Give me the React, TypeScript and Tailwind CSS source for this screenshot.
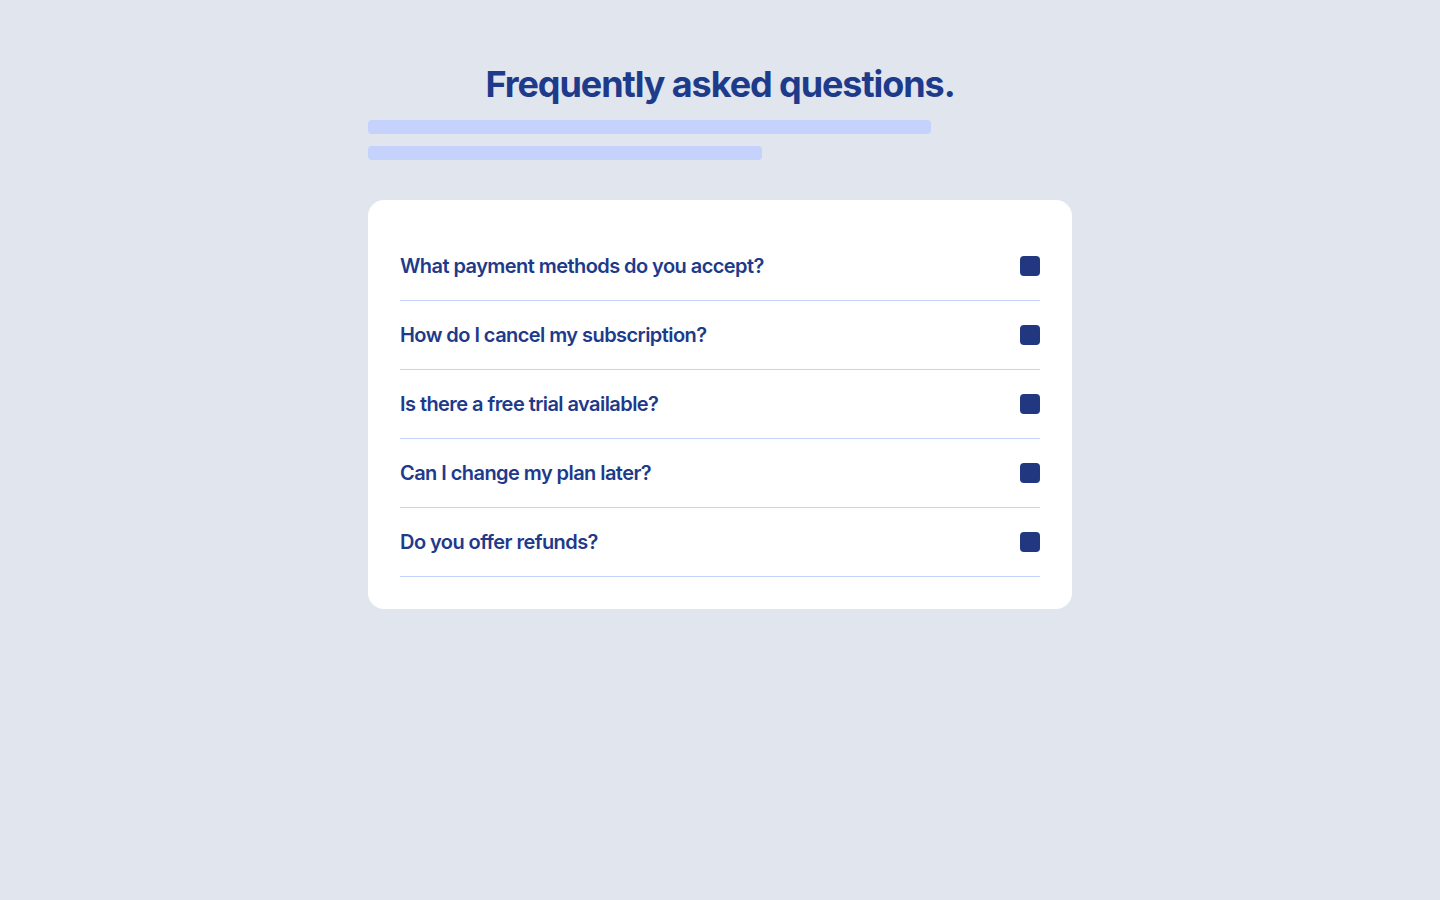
const QUESTIONS = [
  "What payment methods do you accept?",
  "How do I cancel my subscription?",
  "Is there a free trial available?",
  "Can I change my plan later?",
  "Do you offer refunds?",
];

export default function App() {
  return (
    <div
      className="min-h-screen bg-[#e0e5ee] pt-16"
      style={{ fontFamily: "Inter, 'Noto Sans', sans-serif" }}
    >
      <div className="mx-auto w-[704px]">
        <h1 className="text-center text-[36px] leading-[40px] font-bold tracking-[-0.03em] text-[#1e3a8a]">
          Frequently asked questions.
        </h1>
        <div className="mt-4 flex flex-col gap-3">
          <div className="h-[14px] w-[563px] rounded bg-[#c4d2fc]" />
          <div className="h-[14px] w-[394px] rounded bg-[#c4d2fc]" />
        </div>
        <div className="mt-10 rounded-2xl bg-white p-8">
          {QUESTIONS.map((q) => (
            <div
              key={q}
              className="flex h-[69px] items-center justify-between border-b border-[#c4d2fc] pb-px"
            >
              <span className="text-[20px] font-semibold tracking-[-0.028em] text-[#1e3a8a]">{q}</span>
              <span className="h-5 w-5 rounded bg-[#213780]" />
            </div>
          ))}
        </div>
      </div>
    </div>
  );
}
